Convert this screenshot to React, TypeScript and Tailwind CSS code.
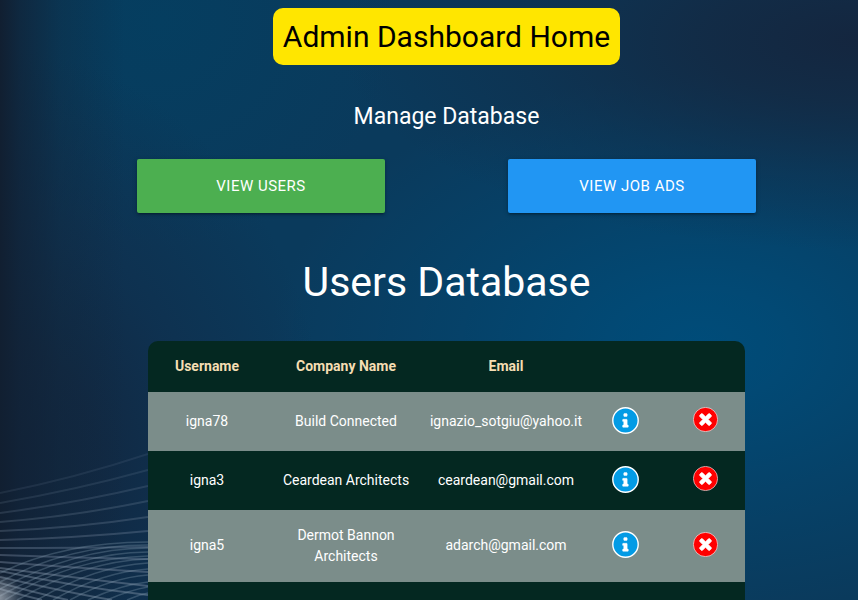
import React from "react";

const users = [
  { name: "igna78", company: "Build Connected", email: "ignazio_sotgiu@yahoo.it", h: "h-[59px]", remove: "mb-1" },
  { name: "igna3", company: "Ceardean Architects", email: "ceardean@gmail.com", h: "h-[59px]", remove: "mb-1" },
  { name: "igna5", company: "Dermot Bannon Architects", email: "adarch@gmail.com", h: "h-[72px] pb-px", remove: "mb-[2px]" },
];

const columns = "grid grid-cols-[118px_160px_160px_79px_81px] items-center text-center";

function InfoIcon() {
  return (
    <svg className="mb-[2px] size-[27px]" viewBox="0 0 27 27">
      <circle cx="13.5" cy="13.5" r="12.7" fill="#039be5" stroke="#fff" strokeWidth="1.4" />
      <path
        transform="translate(10.6 6.6) scale(.00893)"
        fill="#fff"
        stroke="#fff"
        strokeWidth="50"
        d="M640 1344v128q0 26-19 45t-45 19H64q-26 0-45-19t-19-45v-128q0-26 19-45t45-19h64V896H64q-26 0-45-19T0 832V704q0-26 19-45t45-19h384q26 0 45 19t19 45v576h64q26 0 45 19t19 45zM512 64v192q0 26-19 45t-45 19H192q-26 0-45-19t-19-45V64q0-26 19-45t45-19h256q26 0 45 19t19 45z"
      />
    </svg>
  );
}

function DeleteIcon({ className }: { className: string }) {
  return (
    <svg className={`${className} size-[25px]`} viewBox="0 0 25 25">
      <circle cx="12.5" cy="12.5" r="12.1" fill="#f00" stroke="#fff" strokeWidth=".6" />
      <path
        transform="translate(3.5 2.9) scale(.01005)"
        fill="#fff"
        stroke="#fff"
        strokeWidth="70"
        d="M1490 1322q0 40-28 68l-136 136q-28 28-68 28t-68-28l-294-294-294 294q-28 28-68 28t-68-28l-136-136q-28-28-28-68t28-68l294-294-294-294q-28-28-28-68t28-68l136-136q28-28 68-28t68 28l294 294 294-294q28-28 68-28t68 28l136 136q28 28 28 68t-28 68l-294 294 294 294q28 28 28 68z"
      />
    </svg>
  );
}

const sweepPaths = [
  "M0 53Q76 38 148 14", "M0 63Q76 50 148 30", "M0 73Q76 63 148 46", "M0 82Q76 76 148 61",
  "M0 91Q76 88 148 77", "M0 100Q76 98 148 91", "M0 108Q76 108 148 107", "M0 115Q76 118 148 119",
  "M0 122Q76 128 148 132", "M0 128Q76 138 148 146", "M0 131Q76 147 148 155", "M0 137Q70 153 112 160",
  "M0 143Q40 154 68 160", "M0 149Q25 156 42 160",
];
const arcPaths = [
  "M0 133Q64 102 148 102", "M0 142Q68 105 148 105", "M0 149Q76 108 148 108", "M0 156Q78 112 148 112",
  "M5 160Q70 118 148 116", "M17 160Q85 121 148 119", "M37 160Q95 126 148 123", "M53 160Q102 132 148 129",
  "M70 160Q110 138 148 135", "M88 160Q120 145 148 142", "M107 160Q130 150 148 147", "M127 160Q138 155 148 153",
];

function Waves() {
  return (
    <svg className="absolute left-0 top-[440px] h-[160px] w-[148px]" viewBox="0 0 148 160" fill="none">
      <defs>
        <radialGradient id="glow" gradientUnits="userSpaceOnUse" cx="0" cy="158" r="24">
          <stop stopColor="#c3cbd4" stopOpacity=".65" />
          <stop offset="1" stopColor="#c3cbd4" stopOpacity="0" />
        </radialGradient>
      </defs>
      {sweepPaths.map((d, i) => (
        <path key={d} d={d} stroke="#8f9fb5" strokeWidth="2" opacity={Math.min(0.12 + i * 0.03, 0.4)} />
      ))}
      {arcPaths.map((d) => (
        <path key={d} d={d} stroke="#869fb0" strokeWidth="1.7" opacity=".32" />
      ))}
      <rect width="148" height="160" fill="url(#glow)" />
    </svg>
  );
}

export default function App() {
  return (
    <div className="relative h-[600px] w-[858px] overflow-hidden bg-[#0a3a5c] bg-[linear-gradient(90deg,#111f31_0px,rgba(17,34,54,0.75)_20px,rgba(17,38,58,0.35)_60px,rgba(17,38,58,0)_125px),radial-gradient(ellipse_330px_420px_at_0px_470px,#11233a_0%,rgba(18,39,64,0.9)_30%,rgba(18,42,70,0.55)_58%,rgba(18,42,70,0)_100%),radial-gradient(ellipse_520px_210px_at_858px_40px,#14263f_0%,rgba(20,40,65,0.8)_30%,rgba(20,40,65,0.35)_64%,rgba(20,38,63,0)_100%),radial-gradient(ellipse_430px_270px_at_700px_345px,#004c79_0%,rgba(0,76,121,0.85)_20%,rgba(0,76,121,0.45)_55%,rgba(0,76,121,0)_100%),radial-gradient(ellipse_240px_230px_at_160px_20px,#053e60_0%,rgba(5,62,96,0)_100%)] font-['Roboto',sans-serif] text-white">
      <Waves />
      <main className="relative ml-[137px] flex w-[619px] flex-col items-center pt-2">
        <h1 className="flex h-[57px] w-[347px] items-center justify-center whitespace-nowrap rounded-[10px] bg-[#ffe600] text-[30px] font-normal text-black">
          Admin Dashboard Home
        </h1>
        <h2 className="mt-[35px] whitespace-nowrap text-[23px] leading-[34px]">Manage Database</h2>
        <div className="mt-[25px] flex w-full justify-between text-[15px] tracking-[0.5px]">
          <button className="h-[54px] w-[248px] rounded-[2px] bg-[#4caf50] shadow-[0_2px_2px_0_rgba(0,0,0,0.14),0_3px_1px_-2px_rgba(0,0,0,0.12),0_1px_5px_0_rgba(0,0,0,0.2)]">VIEW USERS</button>
          <button className="h-[54px] w-[248px] rounded-[2px] bg-[#2196f3] shadow-[0_2px_2px_0_rgba(0,0,0,0.14),0_3px_1px_-2px_rgba(0,0,0,0.12),0_1px_5px_0_rgba(0,0,0,0.2)]">VIEW JOB ADS</button>
        </div>
        <h2 className="mt-[44px] whitespace-nowrap text-[41px] leading-[50px]">Users Database</h2>
        <section className="mt-[34px] w-[597px] overflow-hidden rounded-t-[10px] bg-[#042821] text-[14px] leading-[21px]">
          <div className={`${columns} h-[51px] font-bold text-[#f5deb3]`}>
            <span>Username</span>
            <span>Company Name</span>
            <span>Email</span>
          </div>
          {users.map((user) => (
            <div key={user.name} className={`${columns} ${user.h} odd:bg-transparent even:bg-[#7b8d8a]`}>
              <span>{user.name}</span>
              <span className="px-4">{user.company}</span>
              <span>{user.email}</span>
              <span className="flex justify-center"><InfoIcon /></span>
              <span className="flex justify-center"><DeleteIcon className={user.remove} /></span>
            </div>
          ))}
          <div className="h-[60px]" />
        </section>
      </main>
    </div>
  );
}
